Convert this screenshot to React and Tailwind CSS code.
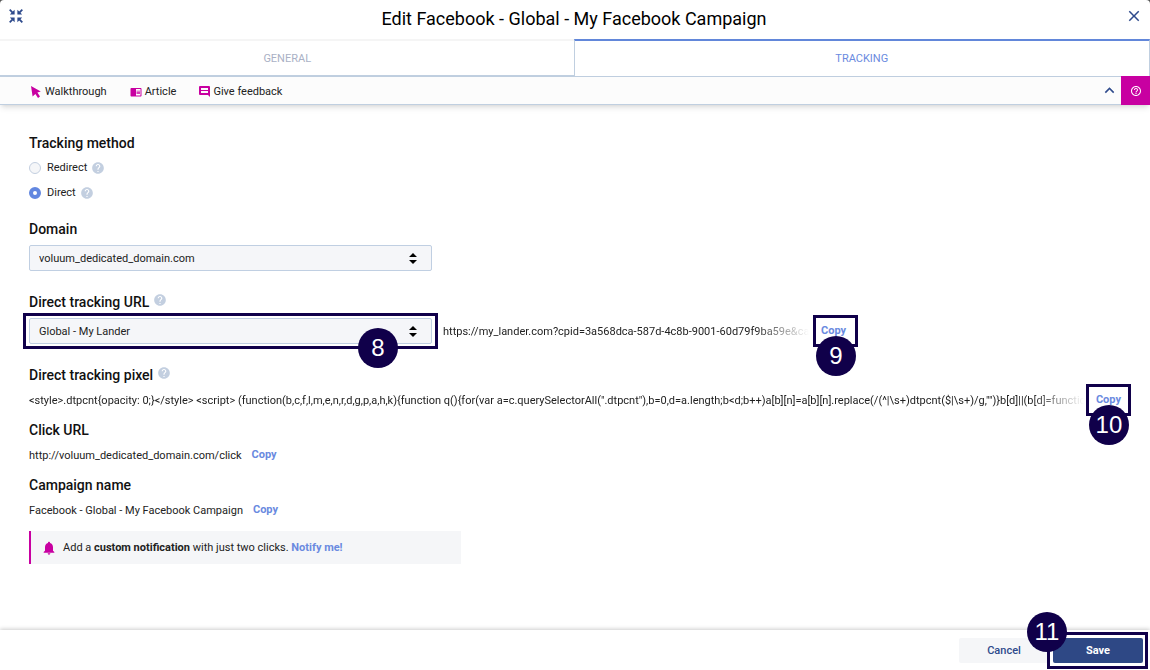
import React from "react";
import {
  MdHelp,
  MdHelpOutline,
  MdClose,
  MdKeyboardArrowUp,
  MdNotifications,
  MdChromeReaderMode,
} from "react-icons/md";

const PIXEL_CODE =
  '<style>.dtpcnt{opacity: 0;}</style> <script> (function(b,c,f,l,m,e,n,r,d,g,p,a,h,k){function q(){for(var a=c.querySelectorAll(".dtpcnt"),b=0,d=a.length;b<d;b++)a[b][n]=a[b][n].replace(/(^|\\s+)dtpcnt($|\\s+)/g,"")}b[d]||(b[d]=function(){(b[d].q=b[d].q||[]).push(arguments)}';

function CollapseIcon() {
  return (
    <svg viewBox="0 0 14 14" className="size-3.5" fill="#2e4a8c" stroke="#2e4a8c" aria-hidden="true">
      {[0, 90, 180, 270].map((angle) => (
        <g key={angle} transform={`rotate(${angle} 7 7)`}>
          <path d="M0.7 0.7 3.6 3.6" strokeWidth="1.8" fill="none" />
          <path d="M5.6 0.8v4.8H0.8z" stroke="none" />
        </g>
      ))}
    </svg>
  );
}

function CursorIcon() {
  return (
    <svg viewBox="0 0 10 12" className="h-3 w-2.5" fill="#c800a1" aria-hidden="true">
      <path d="M0 0 9.8 5.6 6.4 6.6 9 10.6 7 12 4.4 8 1.6 10.6z" />
    </svg>
  );
}

function FeedbackIcon() {
  return (
    <svg viewBox="0 0 11 11" className="size-[11px]" fill="#c800a1" fillRule="evenodd" aria-hidden="true">
      <path d="M1 0H10Q11 0 11 1V11L9 9H1Q0 9 0 8V1Q0 0 1 0ZM2 2V4H9V2ZM2 5V7H9V5Z" />
    </svg>
  );
}

function Help({ label }) {
  return (
    <button type="button" aria-label={label} className="text-[#c3cfe0]">
      <MdHelp className="size-3.5" />
    </button>
  );
}

function Badge({ children, className }) {
  return (
    <span
      className={`absolute z-10 flex size-10 items-center justify-center rounded-full bg-[#10004a] font-['Liberation_Sans',sans-serif] text-2xl text-white ${className}`}
    >
      {children}
    </span>
  );
}

function Outline({ className }) {
  return <span className={`pointer-events-none absolute border-3 border-[#10004a] ${className}`} />;
}

function Heading({ children, help }) {
  return (
    <h2 className="flex h-5 items-center gap-1 text-sm font-medium text-[#111]">
      {children}
      {help && (
        <span className="mb-1 flex">
          <Help label={help} />
        </span>
      )}
    </h2>
  );
}

function Radio({ label, help, ...props }) {
  return (
    <div className="flex h-[25px] items-center gap-1">
      <label className="flex items-center gap-1.5">
        <input
          type="radio"
          name="method"
          className="size-3 appearance-none rounded-full border border-[#c3cfe0] bg-[#f5f6f8] checked:border-4 checked:border-[#6287e0] checked:bg-white"
          {...props}
        />
        {label}
      </label>
      <Help label={help} />
    </div>
  );
}

function Select({ label, option }) {
  return (
    <div className="relative">
      <select
        aria-label={label}
        className="h-[26px] w-full appearance-none rounded-xs border border-[#c0cfe2] bg-[#f5f6f9] px-[9px] pt-0.5"
      >
        <option>{option}</option>
      </select>
      <svg viewBox="0 0 8 11" className="pointer-events-none absolute top-2 right-[15px] h-[11px] w-2" aria-hidden="true">
        <path d="M4 0 8 4H0zM0 7H8L4 11z" />
      </svg>
    </div>
  );
}

function Copy() {
  return (
    <button type="button" className="font-bold text-[#6a8ae0]">
      Copy
    </button>
  );
}

export default function App() {
  return (
    <div className="bg-[#555]">
      <div className="flex min-h-screen flex-col overflow-hidden rounded-t-sm bg-white font-[Roboto,sans-serif] text-[11px] leading-4 text-[#222]">
        <header className="flex h-[39px] items-center justify-between px-[7px] pb-0.5">
          <button type="button" aria-label="Collapse" className="mb-1.5 ml-0.5">
            <CollapseIcon />
          </button>
          <h1 className="text-lg text-black">Edit Facebook - Global - My Facebook Campaign</h1>
          <button type="button" aria-label="Close" className="mb-1.5 text-[#2e4a8c]">
            <MdClose className="size-[18px]" />
          </button>
        </header>

        <nav className="flex h-[38px]">
          <button
            type="button"
            className="flex-1 border-t-2 border-b-2 border-t-[#f5f5f5] border-b-[#c0cfe0] pt-0.5 text-[#aab1c5]"
          >
            GENERAL
          </button>
          <button
            type="button"
            className="-ml-px flex-1 border border-t-2 border-[#c0cfe0] border-t-[#6287da] bg-white text-[#6a8ae0]"
          >
            TRACKING
          </button>
        </nav>

        <div className="flex h-7 items-stretch border-b border-[#c0cfe0] bg-[#fcfcfc] shadow-md">
          <div className="flex flex-1 items-center gap-[23px] pt-0.5 pl-[31px]">
            <a href="#walkthrough" className="flex items-center gap-1">
              <CursorIcon />
              Walkthrough
            </a>
            <a href="#article" className="flex items-center gap-[3px]">
              <MdChromeReaderMode className="size-3 text-[#c800a1]" />
              Article
            </a>
            <a href="#feedback" className="flex items-center gap-[3px]">
              <FeedbackIcon />
              Give feedback
            </a>
          </div>
          <button type="button" aria-label="Hide help" className="px-0.5 text-[#2e4a8c]">
            <MdKeyboardArrowUp className="size-[19px]" />
          </button>
          <button
            type="button"
            aria-label="Help"
            className="-mt-px -mb-px flex w-[29px] items-center justify-center bg-[#c800a1] text-white"
          >
            <MdHelpOutline className="size-3" />
          </button>
        </div>

        <main className="flex flex-1 flex-col px-[29px] pt-7">
          <section>
            <Heading>Tracking method</Heading>
            <div className="mt-0.5">
              <Radio label="Redirect" help="About redirect" />
              <Radio label="Direct" help="About direct" defaultChecked />
            </div>
          </section>

          <section className="mt-3.5">
            <Heading>Domain</Heading>
            <div className="mt-1.5 w-[403px]">
              <Select label="Domain" option="voluum_dedicated_domain.com" />
            </div>
          </section>

          <section className="mt-[21px]">
            <Heading help="About direct tracking URL">Direct tracking URL</Heading>
            <div className="mt-1.5 flex items-center">
              <div className="relative w-[403px]">
                <Select label="Direct tracking URL" option="Global - My Lander" />
                <Outline className="-inset-x-1.5 -inset-y-[5px]" />
                <Badge className="top-2.5 right-[34px]">8</Badge>
              </div>
              <p className="ml-[11px] w-[366px] overflow-hidden mask-r-from-85% mask-r-to-100% pt-0.5 whitespace-nowrap">
                https://my_lander.com?cpid=3a568dca-587d-4c8b-9001-60d79f9ba59e&amp;campaign
              </p>
              <div className="relative ml-3 flex">
                <Copy />
                <Outline className="-inset-y-2 -right-3 -left-2" />
                <Badge className="top-[13px] -left-[5px]">9</Badge>
              </div>
            </div>
          </section>

          <section className="mt-[21px]">
            <Heading help="About direct tracking pixel">Direct tracking pixel</Heading>
            <div className="mt-[5px] flex h-5 items-center">
              <p className="min-w-0 flex-1 overflow-hidden mask-r-from-95% mask-r-to-100% pt-0.5 whitespace-nowrap">
                {PIXEL_CODE}
              </p>
              <div className="relative ml-3 flex">
                <Copy />
                <Outline className="-inset-x-2.5 -inset-y-2" />
                <Badge className="top-[13px] -left-[7px]">10</Badge>
              </div>
            </div>
          </section>

          <section className="mt-2.5">
            <Heading>Click URL</Heading>
            <div className="mt-[5px] flex h-5 items-center gap-2.5">
              <p className="pt-0.5">http://voluum_dedicated_domain.com/click</p>
              <Copy />
            </div>
          </section>

          <section className="mt-2.5">
            <Heading>Campaign name</Heading>
            <div className="mt-[5px] flex h-5 items-center gap-2.5">
              <p className="pt-0.5">Facebook - Global - My Facebook Campaign</p>
              <Copy />
            </div>
          </section>

          <aside className="mt-[11px] flex h-[33px] w-[432px] items-center border-l-2 border-[#c800a1] bg-[#f5f6f8] pl-2.5">
            <MdNotifications className="mr-1.5 size-4 text-[#c800a1]" />
            <p>
              Add a <strong className="font-bold">custom notification</strong> with just two clicks.{" "}
              <a href="#notify" className="font-bold text-[#6a8ae0]">
                Notify me!
              </a>
            </p>
          </aside>
        </main>

        <footer className="flex h-10 items-center justify-end gap-1 px-[7px] shadow-[0_-1px_4px_rgba(0,0,0,0.2)]">
          <button type="button" className="h-[25px] w-[90px] rounded-xs bg-[#f5f6f8] pt-px font-medium text-[#2e4a8c]">
            Cancel
          </button>
          <div className="relative">
            <button type="button" className="h-[25px] w-[90px] rounded-xs bg-[#2e4885] pt-px font-bold text-white">
              Save
            </button>
            <Outline className="-inset-y-1.5 -right-[5px] -left-1.5" />
            <Badge className="-top-[26px] -left-[26px]">11</Badge>
          </div>
        </footer>
      </div>
    </div>
  );
}
